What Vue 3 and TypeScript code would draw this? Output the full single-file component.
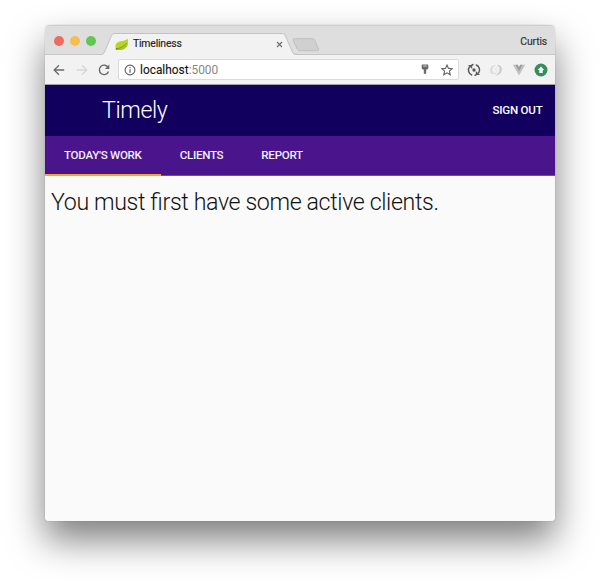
<script setup lang="ts">
import { ref } from 'vue'

const dots: string[] = ['red', 'yellow', 'green']
const tabs: string[] = ["Today's work", 'Clients', 'Report']
const active = ref(0)
</script>

<template>
  <div class="desktop">
    <div class="window">
      <div class="strip">
        <div class="dots"><span v-for="d in dots" :key="d" class="dot" :class="d"></span></div>
        <div class="page-tab">
          <svg class="shape" width="197" height="24" viewBox="0 0 197 24">
            <path d="M0 24V23.500H1Q3 23 4 20.500L10.500 4Q11.500 2.500 13 2.500H181.500Q183.500 2.500 184.300 4.500L191.500 21Q192.500 23.500 195 23.500H197V24Z" fill="#f2f2f2" />
            <path d="M0 23.500H.5Q2.500 23.500 3.500 21L10.500 4.500Q11.500 2.500 13 2.500H181.500Q183.500 2.500 184.300 4.500L191.500 21Q192.500 23.500 195 23.500H197" fill="none" stroke="#c2c2c2" />
          </svg>
          <svg class="leaf" width="14" height="13" viewBox="0 0 14 13">
            <path d="M12.500.500C11.500 2.500 8 2.600 4.500 3.500 1 4.500 0 7 .6 9.800 2 11.700 4 12.200 7 11.700 12 10.700 14.300 6 12.500.500Z" fill="#bdd324" />
            <path d="M.8 10.200C5 10.500 9.500 8.500 12.300 4.500 12.900 7.800 10.500 11 7 11.800 4 12.500 2 12 .8 10.200Z" fill="#a5c822" />
            <path d="M1 10.800C5 10.500 9 8.500 11.500 5" fill="none" stroke="#6f9a20" stroke-width=".8" />
            <circle cx="1.600" cy="11.100" r="1" fill="#718f1a" />
          </svg>
          <span class="page-name">Timeliness</span>
          <svg class="close" width="7" height="7" viewBox="0 0 7 7"><path d="M1 1L6 6M6 1L1 6" stroke="#6c6c6c" stroke-width="1.100" /></svg>
        </div>
        <svg class="new-tab" width="28" height="14" viewBox="0 0 28 14">
          <path d="M2.200.700H20.500Q22 .700 22.700 2L26.600 11.200Q27 12.700 25.500 12.700H7.500Q6 12.700 5.400 11.500L1.200 2.200Q.7.700 2.200.700Z" fill="#d0d0d0" stroke="#bfbfbf" />
        </svg>
        <span class="user">Curtis</span>
      </div>

      <div class="toolbar">
        <svg class="nav" width="12" height="12" viewBox="0 0 12 12"><path d="M11.200 6H1.500M6 1.200L1.200 6 6 10.800" fill="none" stroke="#6b6b6b" stroke-width="1.300" /></svg>
        <svg class="nav" width="12" height="12" viewBox="0 0 12 12"><path d="M.8 6H10.500M6 1.200L10.800 6 6 10.800" fill="none" stroke="#d6d6d6" stroke-width="1.300" /></svg>
        <svg class="nav" width="12" height="12" viewBox="0 0 12 12">
          <path d="M10.300 3.800A4.700 4.700 0 1 0 10.500 7.500" fill="none" stroke="#6b6b6b" stroke-width="1.400" /><path d="M11.300.600V5H6.900Z" fill="#6b6b6b" />
        </svg>
        <div class="address">
          <svg width="12" height="12" viewBox="0 0 12 12"><circle cx="6" cy="6" r="4.900" fill="none" stroke="#606060" stroke-width="1.100" /><path d="M6 5.300V8.800M6 3.100V4.300" stroke="#606060" stroke-width="1.200" /></svg>
          <span class="url">localhost<span class="port">:5000</span></span>
          <svg class="key" width="8" height="11" viewBox="0 0 8 11"><path d="M1.500.500H6.500Q7.300.500 7.300 1.300V4Q7.300 5.200 6 5.400H5.200V9.500L4 10 2.800 9.500V5.400H2Q.7 5.200.7 4V1.300Q.7.500 1.500.500Z" fill="#6b6b6b" /><path d="M2.300 2H5.700" stroke="#fff" stroke-width=".7" /></svg>
          <svg class="star" width="12" height="12" viewBox="0 0 12 12"><path d="M6 1L7.500 4.400 11.200 4.700 8.400 7.100 9.300 10.800 6 8.800 2.700 10.800 3.600 7.100.8 4.700 4.500 4.400Z" fill="none" stroke="#666" stroke-width="1.100" /></svg>
        </div>
        <div class="extensions">
          <svg width="14" height="14" viewBox="0 0 14 14">
            <g fill="none" stroke="#5a5a5a" stroke-width="1.500"><path d="M8.800 1.800A5.400 5.400 0 0 1 11.300 10.400M5.200 12.200A5.400 5.400 0 0 1 2.700 3.600" /><path d="M4.500 2.400A5.400 5.400 0 0 1 6.500 1.600M9.500 11.600A5.400 5.400 0 0 1 7.500 12.400" /></g>
            <path d="M1 1.900H5.200V6ZM13 12.100H8.800V8Z" fill="#5a5a5a" /><circle cx="7" cy="7" r="1.700" fill="#5a5a5a" />
          </svg>
          <svg width="14" height="14" viewBox="0 0 14 14">
            <path d="M6.800 2.500C3 1.500.5 5 1.300 8.500 2 11 4.500 11.800 6.500 10.500 3.700 10.300 2.800 8 3.500 5.500 4 3.800 5.300 2.900 6.800 2.500Z" fill="#dadada" />
            <path d="M8 2.200C11.500 1.500 13.600 4.500 12.700 8 11.800 11.200 8.500 13 5.500 12 9 11.500 10.500 9 10.500 6.300 10.500 4.500 9.800 3 8 2.200Z" fill="#cdcdcd" />
            <path d="M8.500 3.500L6.500 5.500 7.500 8.500 6 11" fill="none" stroke="#e3e3e3" />
          </svg>
          <svg width="14" height="14" viewBox="0 0 14 14"><path d="M.8 1.800H4.500L7 6.500 9.500 1.800H13.200L7 12.400Z" fill="#c2c2c2" /><path d="M3.500 1.800H5.800L7 4 8.200 1.800H10.500L7 8.200Z" fill="#9a9a9a" /></svg>
          <svg width="14" height="14" viewBox="0 0 14 14"><circle cx="7" cy="7" r="6.500" fill="#348f5b" /><path d="M7 3.600L10.200 7H8.700V10H5.300V7H3.800Z" fill="#fff" /></svg>
        </div>
      </div>

      <header class="app-bar">
        <h1>Timely</h1>
        <button>Sign out</button>
      </header>
      <nav class="tabs">
        <a v-for="(t, i) in tabs" :key="t" :class="{ active: i === active }" @click="active = i">{{ t }}</a>
      </nav>
      <main>You must first have some active clients.</main>
    </div>
  </div>
</template>

<style>
body { background: #fff; overflow: hidden; }
</style>
<style scoped>
* { box-sizing: border-box; }
svg { display: block; flex: none; }
.desktop { height: 585px; padding: 25px 45px 0 45px; font-family: Roboto, "Liberation Sans", sans-serif; }
.window { height: 496px; display: flex; flex-direction: column; border-radius: 5px 5px 3px 3px; overflow: hidden; background: #fafafa; box-shadow: 0 0 1px rgba(0, 0, 0, .4), 0 19px 36px rgba(0, 0, 0, .5); }
.strip { height: 30px; flex: none; display: flex; background: #dedede; border-top: 1px solid #cecece; box-shadow: inset 0 -1px #c6c6c6; }
.dots { display: flex; gap: 6px; padding: 10px 0 0 9px; width: 56px; flex: none; }
.dot { width: 10px; height: 10px; border-radius: 50%; flex: none; }
.red { background: #ed6b60; }
.yellow { background: #f5bf4f; }
.green { background: #61c654; }
.page-tab { position: relative; width: 197px; height: 24px; margin-top: 5px; display: flex; align-items: center; padding: 2px 11px 0 14px; flex: none; }
.shape { position: absolute; left: 0; top: 0; }
.leaf, .page-name, .close { position: relative; }
.page-name { margin-left: 4px; font: 10.400px/14px Roboto, sans-serif; letter-spacing: -.18px; color: #222; -webkit-text-stroke: .15px #222; flex: 1; }
.close { margin-right: 4.500px; }
.new-tab { margin: 12px 0 0 -6px; }
.user { margin: 9px 8px 0 auto; font: 10.400px/13px Roboto, sans-serif; letter-spacing: -.15px; color: #303030; -webkit-text-stroke: .15px #303030; }
.toolbar { height: 30px; flex: none; display: flex; align-items: center; background: #f2f2f2; border-bottom: 1px solid #a3a0aa; padding: 0 7px 0 8px; }
.nav { margin-right: 10.500px; }
.address { width: 341px; height: 21px; display: flex; align-items: center; margin-left: -2.500px; padding: 0 5px 0 5px; background: #fff; border: 1px solid #dadada; border-radius: 2px; }
.url { flex: 1; margin-left: 4px; font: 11.900px/16px Roboto, sans-serif; color: #111; -webkit-text-stroke: .1px #111; }
.port { color: #888; -webkit-text-stroke: 0; }
.key { margin-right: 12.500px; }
.extensions { display: flex; flex: 1; justify-content: space-between; margin-left: 7.500px; }
.app-bar { height: 51px; flex: none; display: flex; align-items: center; justify-content: space-between; padding: 0 12.500px 0 57px; background: #12005e; color: #fff; }
h1 { margin: -1px 0 0; font-size: 23.200px; line-height: 32px; font-weight: 300; letter-spacing: -.4px; }
button { margin-top: -1px; border: 0; background: none; padding: 0; font: 500 11.600px/16px Roboto, sans-serif; letter-spacing: -.25px; text-transform: uppercase; color: #fff; }
.tabs { height: 40px; flex: none; display: flex; background: #4a148c; border-bottom: 1px solid #7745a5; }
.tabs a { height: 40px; padding: 0 19px; font-size: 11.600px; line-height: 39px; font-weight: 500; letter-spacing: -.29px; color: #f3edf7; text-transform: uppercase; }
.tabs .active { border-bottom: 2px solid #f9a825; }
main { padding: 9.500px 6px; font-size: 23.200px; line-height: 32px; font-weight: 300; letter-spacing: -.37px; font-feature-settings: "liga" 1; color: #111; white-space: nowrap; }
</style>
